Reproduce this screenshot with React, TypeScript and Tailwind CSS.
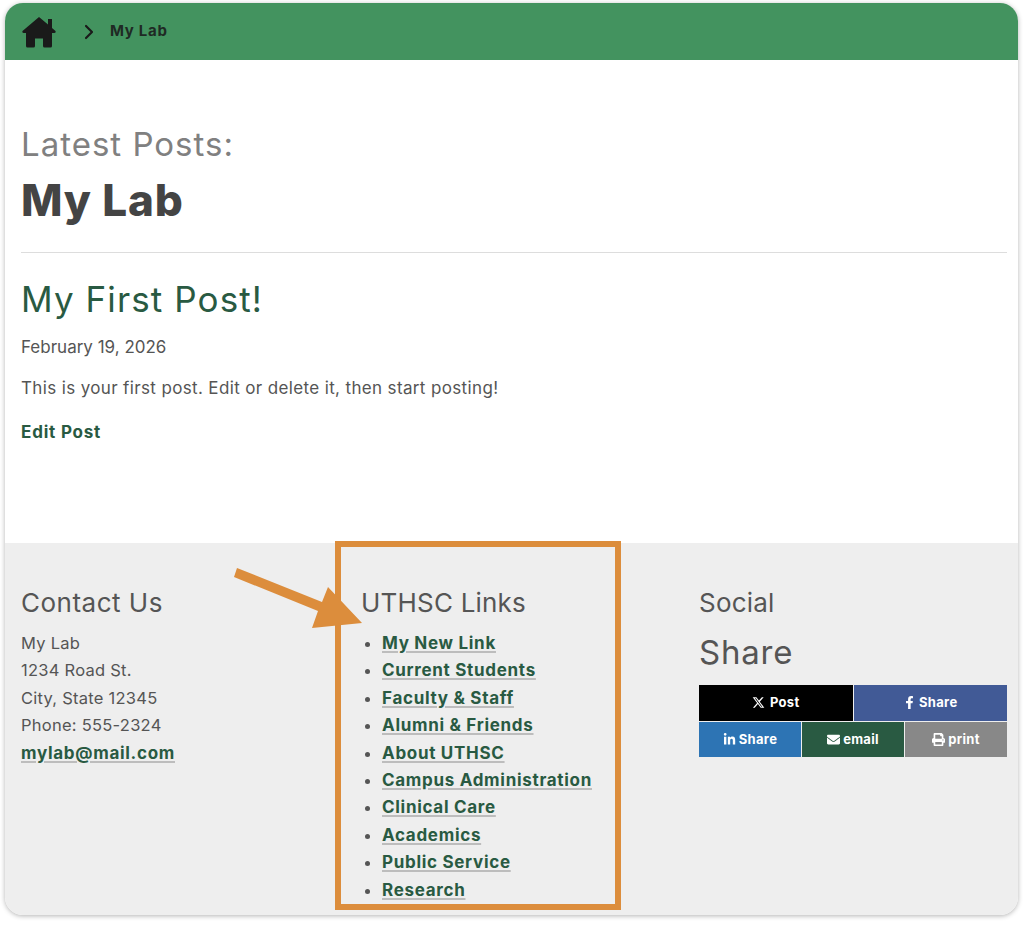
import React from 'react';
import { FaFacebookF, FaLinkedinIn, FaEnvelope, FaPrint } from 'react-icons/fa';
import { FaXTwitter } from 'react-icons/fa6';
import { ChevronRight } from 'lucide-react';

const links = [
  'My New Link',
  'Current Students',
  'Faculty & Staff',
  'Alumni & Friends',
  'About UTHSC',
  'Campus Administration',
  'Clinical Care',
  'Academics',
  'Public Service',
  'Research',
];

const linkClass =
  'text-[17px] font-bold tracking-[0.7px] text-[#295a42] underline decoration-[#bdbdbd] decoration-2 underline-offset-2';

const HomeIcon = () => (
  <svg width="36" height="36" viewBox="0 0 36 36" fill="#1a1a1a">
    <path d="M18 3 L27 10.5 V5 H31 V14 L34.5 17 Q35.5 18.5 33.5 19 H31 V32 Q31 33.5 29.5 33.5 H23.5 Q22 33.5 22 32 V24.5 H14 V32 Q14 33.5 12.5 33.5 H6.5 Q5 33.5 5 32 V19 H2.5 Q0.5 18.5 1.5 17 Z" />
  </svg>
);

export default function App() {
  return (
    <div className="relative w-[1024px] h-[925px] bg-white pt-[3px] pl-[5px] font-['Inter',sans-serif] text-[#555555] overflow-hidden">
      <div className="w-[1013px] h-[912px] rounded-[18px] overflow-hidden flex flex-col shadow-[0_1px_5px_rgba(0,0,0,0.3)]">
        {/* Breadcrumb */}
        <header className="h-[57px] bg-[#43935f] flex items-center pl-4 shrink-0">
          <HomeIcon />
          <ChevronRight className="w-6 h-6 ml-[20px] text-[#1a1a1a]" strokeWidth={2.2} />
          <span className="ml-[9px] text-[15px] font-bold tracking-[0.7px] text-[#1f2a24]">My Lab</span>
        </header>

        {/* Posts */}
        <main className="h-[483px] bg-white pl-4 pr-[11px] pt-[64px] shrink-0">
          <p className="text-[33px] leading-[40px] tracking-[1px] text-[#808080]">Latest Posts:</p>
          <h1 className="mt-[11px] text-[44px] leading-[50px] font-extrabold tracking-[0.8px] text-[#444444]">My Lab</h1>
          <hr className="mt-[27px] border-t border-[#dddddd]" />
          <h2 className="mt-[25px] text-[35px] leading-[42px] tracking-[1.1px] text-[#295a42]">My First Post!</h2>
          <p className="mt-[15px] text-[17px] leading-[24px]">February 19, 2026</p>
          <p className="mt-[17px] text-[17px] leading-[24px] tracking-[0.36px]">
            This is your first post. Edit or delete it, then start posting!
          </p>
          <a className="block mt-[20px] text-[17px] leading-[24px] font-bold tracking-[0.8px] text-[#295a42]">Edit Post</a>
        </main>

        {/* Footer */}
        <footer className="flex-1 bg-[#eeeeee] grid grid-cols-[340px_338px_1fr] px-4 pt-[43px]">
          <div>
            <h3 className="text-[26px] leading-[34px] tracking-[0.5px]">Contact Us</h3>
            <div className="mt-[10px] text-[16.5px] leading-[27.4px] tracking-[0.25px]">
              <p>My Lab</p>
              <p>1234 Road St.</p>
              <p>City, State 12345</p>
              <p>Phone: 555-2324</p>
              <a className={linkClass}>mylab@mail.com</a>
            </div>
          </div>
          <div>
            <h3 className="text-[26px] leading-[34px] tracking-[0.2px]">UTHSC Links</h3>
            <ul className="mt-[10px] pl-[21px] list-disc text-[16.5px] leading-[27.4px] marker:text-[#555555]">
              {links.map((l) => (
                <li key={l}>
                  <a className={linkClass}>{l}</a>
                </li>
              ))}
            </ul>
          </div>
          <div>
            <h3 className="text-[26px] leading-[34px] tracking-[0.2px]">Social</h3>
            <h3 className="mt-[11px] text-[33px] leading-[42px] tracking-[0.8px]">Share</h3>
            <div className="mt-[12px] w-[308px] text-[13px] font-bold tracking-[0.3px] text-white">
              <div className="grid grid-cols-2 gap-px h-[35.5px]">
                <a className="bg-black flex items-center justify-center gap-[5px]">
                  <FaXTwitter className="w-[13px] h-[13px]" /> Post
                </a>
                <a className="bg-[#415a96] flex items-center justify-center gap-[3px]">
                  <FaFacebookF className="w-[13px] h-[13px]" /> Share
                </a>
              </div>
              <div className="grid grid-cols-3 gap-px h-[35.5px] mt-px">
                <a className="bg-[#2d74b4] flex items-center justify-center gap-[3px]">
                  <FaLinkedinIn className="w-[13px] h-[13px]" /> Share
                </a>
                <a className="bg-[#295a42] flex items-center justify-center gap-[3px]">
                  <FaEnvelope className="w-[13px] h-[13px]" /> email
                </a>
                <a className="bg-[#888888] flex items-center justify-center gap-[3px]">
                  <FaPrint className="w-[13px] h-[13px]" /> print
                </a>
              </div>
            </div>
          </div>
        </footer>
      </div>

      {/* Annotation box and arrow over the page */}
      <div className="absolute left-[335px] top-[541px] w-[286px] h-[369px] border-[6px] border-[#dc8d3c]" />
      <svg className="absolute left-[230px] top-[564px]" width="140" height="70" viewBox="0 0 140 70">
        <path d="M7 4 L92 38 L98 23 L132 59 L82 64 L88 47 L4 13 Z" fill="#dc8d3c" />
      </svg>
    </div>
  );
}
